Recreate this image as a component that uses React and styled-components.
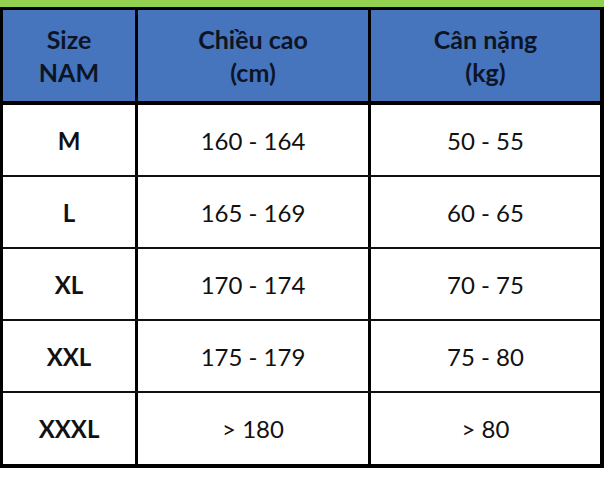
import React from "react";
import styled, { createGlobalStyle } from "styled-components";

const Global = createGlobalStyle`
  html, body { margin: 0; padding: 0; background: #fff; }
  body { font-family: Lato, "Open Sans", "Liberation Sans", sans-serif; }
`;

const Page = styled.div`
  width: 604px;
  height: 494px;
  background: #fff;
`;

const GreenBar = styled.div`
  height: 7px;
  background: #92d050;
`;

const Table = styled.div`
  border-top: 3px solid #000;
  border-left: 3px solid #000;
  border-right: 4px solid #000;
  border-bottom: 4px solid #000;
`;

const Row = styled.div`
  display: grid;
  grid-template-columns: 132px 233px 1fr;
  height: ${(p) => p.$h}px;
  background: ${(p) => (p.$head ? "#4674bd" : "#fff")};
  border-bottom: ${(p) => (p.$last ? "none" : p.$head ? "4px solid #000" : "2px solid #111")};
`;

const Cell = styled.div`
  display: flex;
  flex-direction: column;
  align-items: center;
  justify-content: center;
  border-left: ${(p) => (p.$first ? "none" : "3px solid #000")};
  color: ${(p) => (p.$head ? "#0d1525" : "#111")};
  font-size: ${(p) => (p.$head ? 25 : 24)}px;
  font-weight: ${(p) => (p.$bold ? 700 : 400)};
  line-height: 33px;
  text-align: center;
`;

const data = [
  ["M", "160 - 164", "50 - 55"],
  ["L", "165 - 169", "60 - 65"],
  ["XL", "170 - 174", "70 - 75"],
  ["XXL", "175 - 179", "75 - 80"],
  ["XXXL", "> 180", "> 80"],
];

export default function App() {
  return (
    <Page>
      <Global />
      <GreenBar />
      <Table>
        <Row $head $h={91}>
          <Cell $first $head $bold>
            <span>Size</span>
            <span>NAM</span>
          </Cell>
          <Cell $head $bold>
            <span>Chiều cao</span>
            <span>(cm)</span>
          </Cell>
          <Cell $head $bold>
            <span>Cân nặng</span>
            <span>(kg)</span>
          </Cell>
        </Row>
        {data.map((r, i) => (
          <Row key={r[0]} $h={i === data.length - 1 ? 71 : 70} $last={i === data.length - 1}>
            <Cell $first $bold>{r[0]}</Cell>
            <Cell>{r[1]}</Cell>
            <Cell>{r[2]}</Cell>
          </Row>
        ))}
      </Table>
    </Page>
  );
}
